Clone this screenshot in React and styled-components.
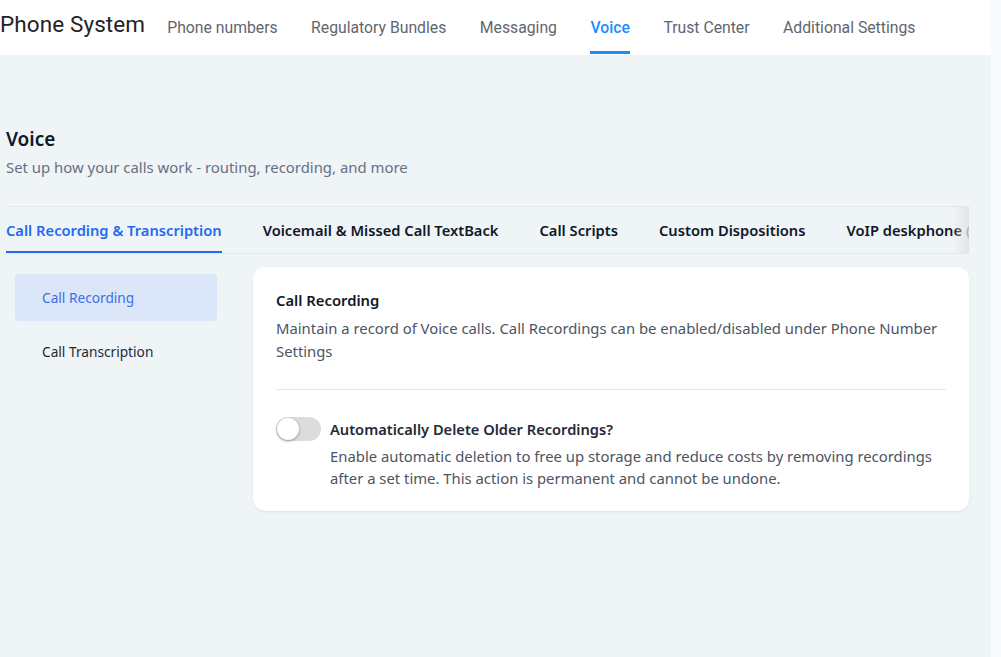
import React, { useState } from "react";
import styled, { createGlobalStyle } from "styled-components";

const Global = createGlobalStyle`
  html, body { margin: 0; padding: 0; }
  body { background: #eff4f7; font-family: "Noto Sans", "Open Sans", sans-serif; }
  * { box-sizing: border-box; }
`;

const Shell = styled.div`
  display: flex;
  width: 1001px;
  height: 657px;
  overflow: hidden;
`;

const Page = styled.div`
  flex: 1;
  display: flex;
  flex-direction: column;
  background: #eff4f7;
  min-width: 0;
`;

const ScrollTrack = styled.div`
  width: 10px;
  background: #f9fafb;
`;

const TopBar = styled.header`
  height: 55px;
  background: #ffffff;
  display: flex;
  align-items: stretch;
  font-family: Roboto, "Liberation Sans", sans-serif;
`;

const Brand = styled.div`
  font-size: 22.5px;
  color: #1f2328;
  display: flex;
  align-items: center;
  padding-bottom: 8px;
  margin-right: 22px;
  letter-spacing: 0.1px;
`;

const NavItem = styled.a`
  position: relative;
  display: flex;
  align-items: center;
  padding-bottom: 1px;
  margin-right: 33.5px;
  font-size: 15.75px;
  color: ${(p) => (p.$active ? "#1a8cff" : "#5f6670")};
  font-weight: ${(p) => (p.$active ? 500 : 400)};
  &::after {
    content: "";
    position: absolute;
    left: 0;
    right: 0;
    bottom: 1px;
    height: 3px;
    background: ${(p) => (p.$active ? "#1a8cff" : "transparent")};
  }
`;

const Content = styled.main`
  padding: 71px 22px 0 6px;
  display: flex;
  flex-direction: column;
`;

const Title = styled.h1`
  margin: 0;
  font-size: 19px;
  font-weight: 600;
  color: #111827;
  line-height: 26px;
`;

const Subtitle = styled.p`
  margin: 4px 0 0;
  font-size: 14.9px;
  color: #667085;
  line-height: 22px;
`;

const TabBar = styled.div`
  position: relative;
  margin-top: 28px;
  height: 48px;
  border-top: 1px solid #e4e8ec;
  border-bottom: 1px solid #e4e8ec;
  display: flex;
  align-items: stretch;
  gap: 41px;
  overflow: hidden;
  white-space: nowrap;
  &::after {
    content: "";
    position: absolute;
    right: 0;
    top: 0;
    bottom: 0;
    width: 16px;
    background: linear-gradient(to right, rgba(226, 230, 235, 0), rgba(222, 226, 231, 0.85));
  }
`;

const Tab = styled.div`
  position: relative;
  display: flex;
  align-items: center;
  font-size: 14.7px;
  font-weight: 600;
  color: ${(p) => (p.$active ? "#1f6bf0" : "#101828")};
  &::after {
    content: "";
    position: absolute;
    left: 0;
    right: 0;
    bottom: -1px;
    height: 3px;
    background: ${(p) => (p.$active ? "#1f6bf0" : "transparent")};
  }
`;

const Body = styled.div`
  display: flex;
  align-items: flex-start;
  gap: 36px;
  padding-top: 13px;
`;

const SideNav = styled.nav`
  width: 202px;
  margin-left: 9px;
  margin-top: 7px;
  display: flex;
  flex-direction: column;
  gap: 7px;
`;

const SideItem = styled.div`
  height: 47px;
  border-radius: 4px;
  padding-left: 27px;
  display: flex;
  align-items: center;
  font-size: 13.7px;
  color: ${(p) => (p.$active ? "#3b70e6" : "#1f2937")};
  background: ${(p) => (p.$active ? "#dbe7f8" : "transparent")};
`;

const Card = styled.section`
  flex: 1;
  background: #ffffff;
  border-radius: 12px;
  box-shadow: 0 1px 2px rgba(16, 24, 40, 0.08);
  padding: 22px 23px 22px;
`;

const CardTitle = styled.h2`
  margin: 0;
  font-size: 14.8px;
  font-weight: 600;
  color: #101828;
  line-height: 22px;
`;

const CardText = styled.p`
  margin: 6px 0 0;
  font-size: 14.85px;
  color: #4b5563;
  line-height: 23px;
`;

const Divider = styled.hr`
  border: 0;
  border-top: 1px solid #e5e7eb;
  margin: 26px 0 27px;
`;

const OptionRow = styled.div`
  display: flex;
  gap: 9px;
  align-items: flex-start;
`;

const Toggle = styled.button`
  flex: none;
  width: 45px;
  height: 24px;
  border-radius: 12px;
  border: 0;
  padding: 0;
  background: #dcdcdc;
  position: relative;
  cursor: pointer;
  &::after {
    content: "";
    position: absolute;
    top: 1px;
    left: ${(p) => (p.$on ? "22px" : "1px")};
    width: 22px;
    height: 22px;
    border-radius: 50%;
    background: #ffffff;
    box-shadow: 0 1px 3px rgba(0, 0, 0, 0.35);
  }
`;

const OptionText = styled.div`
  display: flex;
  flex-direction: column;
`;

const OptionTitle = styled.div`
  font-size: 14.65px;
  font-weight: 600;
  color: #1f2937;
  line-height: 24px;
`;

const OptionDesc = styled.div`
  margin-top: 4px;
  font-size: 14.85px;
  color: #4b5563;
  line-height: 22px;
`;

const navItems = [
  "Phone numbers",
  "Regulatory Bundles",
  "Messaging",
  "Voice",
  "Trust Center",
  "Additional Settings",
];

const tabs = [
  "Call Recording & Transcription",
  "Voicemail & Missed Call TextBack",
  "Call Scripts",
  "Custom Dispositions",
  "VoIP deskphone (SIP)",
];

export default function App() {
  const [on, setOn] = useState(false);
  return (
    <>
      <Global />
      <Shell>
        <Page>
          <TopBar>
            <Brand>Phone System</Brand>
            {navItems.map((n) => (
              <NavItem key={n} $active={n === "Voice"}>
                {n}
              </NavItem>
            ))}
          </TopBar>
          <Content>
            <Title>Voice</Title>
            <Subtitle>Set up how your calls work - routing, recording, and more</Subtitle>
            <TabBar>
              {tabs.map((t, i) => (
                <Tab key={t} $active={i === 0}>
                  {t}
                </Tab>
              ))}
            </TabBar>
            <Body>
              <SideNav>
                <SideItem $active>Call Recording</SideItem>
                <SideItem>Call Transcription</SideItem>
              </SideNav>
              <Card>
                <CardTitle>Call Recording</CardTitle>
                <CardText>
                  Maintain a record of Voice calls. Call Recordings can be enabled/disabled under Phone Number
                  Settings
                </CardText>
                <Divider />
                <OptionRow>
                  <Toggle $on={on} onClick={() => setOn(!on)} aria-label="toggle" />
                  <OptionText>
                    <OptionTitle>Automatically Delete Older Recordings?</OptionTitle>
                    <OptionDesc>
                      Enable automatic deletion to free up storage and reduce costs by removing recordings
                      after a set time. This action is permanent and cannot be undone.
                    </OptionDesc>
                  </OptionText>
                </OptionRow>
              </Card>
            </Body>
          </Content>
        </Page>
        <ScrollTrack />
      </Shell>
    </>
  );
}
